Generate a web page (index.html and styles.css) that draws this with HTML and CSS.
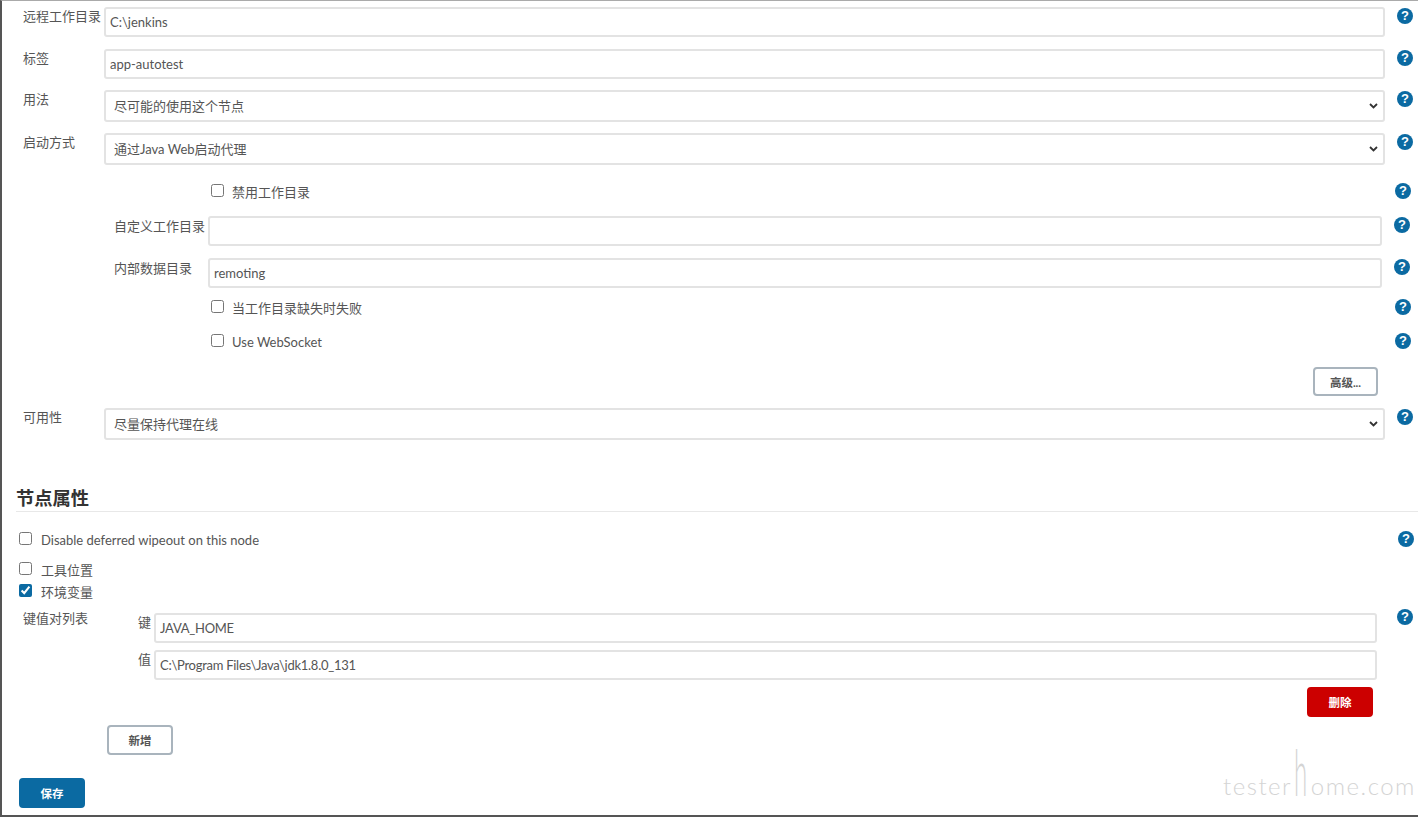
FILE: index.html
```html
<!DOCTYPE html>
<html lang="zh">
<head>
<meta charset="utf-8">
<title>节点配置</title>
<link rel="stylesheet" href="styles.css">
</head>
<body>
<form class="page">
  <div class="row first">
    <label class="label">远程工作目录</label>
    <input class="control wide" value="C:\jenkins">
    <span class="help">?</span>
  </div>
  <div class="row gap-12">
    <label class="label">标签</label>
    <input class="control wide" value="app-autotest">
    <span class="help">?</span>
  </div>
  <div class="row gap-11">
    <label class="label">用法</label>
    <select class="control picker wide"><option>尽可能的使用这个节点</option></select>
    <span class="help">?</span>
  </div>
  <div class="row gap-11">
    <label class="label">启动方式</label>
    <select class="control picker wide"><option>通过Java Web启动代理</option></select>
    <span class="help">?</span>
  </div>

  <div class="check-row nested gap-17">
    <input type="checkbox" class="check"><span class="check-text">禁用工作目录</span>
    <span class="help end">?</span>
  </div>
  <div class="sub gap-14">
    <label class="sub-label">自定义工作目录</label>
    <input class="control sub-field" value="">
    <span class="help">?</span>
  </div>
  <div class="sub gap-12">
    <label class="sub-label">内部数据目录</label>
    <input class="control sub-field" value="remoting">
    <span class="help">?</span>
  </div>
  <div class="check-row nested gap-10">
    <input type="checkbox" class="check"><span class="check-text">当工作目录缺失时失败</span>
    <span class="help end">?</span>
  </div>
  <div class="check-row nested gap-14">
    <input type="checkbox" class="check"><span class="check-text">Use WebSocket</span>
    <span class="help end">?</span>
  </div>
  <div class="advanced gap-15">
    <button type="button" class="btn advanced-btn">高级...</button>
  </div>
  <div class="row gap-12">
    <label class="label">可用性</label>
    <select class="control picker wide"><option>尽量保持代理在线</option></select>
    <span class="help">?</span>
  </div>

  <h2 class="section-title">节点属性</h2>

  <div class="check-row outer gap-18">
    <input type="checkbox" class="check"><span class="check-text">Disable deferred wipeout on this node</span>
    <span class="help end">?</span>
  </div>
  <div class="check-row outer gap-10">
    <input type="checkbox" class="check"><span class="check-text">工具位置</span>
  </div>
  <div class="check-row outer gap-2">
    <input type="checkbox" class="check" checked><span class="check-text">环境变量</span>
  </div>

  <div class="row gap-11">
    <label class="label pair-title">键值对列表</label>
    <label class="pair-label">键</label>
    <input class="control pair-field" value="JAVA_HOME">
    <span class="help pair-help">?</span>
  </div>
  <div class="row gap-7">
    <span class="label"></span>
    <label class="pair-label">值</label>
    <input class="control pair-field" value="C:\Program Files\Java\jdk1.8.0_131">
  </div>
  <div class="delete-row gap-7">
    <button type="button" class="btn danger">删除</button>
  </div>
  <div class="add-row gap-8">
    <button type="button" class="btn">新增</button>
  </div>
  <div class="save-row gap-23">
    <button type="button" class="btn primary">保存</button>
  </div>
</form>
<div class="watermark">tester<span class="tall-h">h</span>ome.com</div>
</body>
</html>
```

FILE: styles.css
```css
* {
  box-sizing: border-box;
}

html,
body {
  margin: 0;
  height: 817px;
  overflow: hidden;
}

body {
  position: relative;
  background: #fff;
  border-left: 2px solid #555;
  border-top: 1px solid #aaa;
  border-bottom: 2px solid #555;
  font-family: "Lato", "Noto Sans CJK SC", sans-serif;
  font-size: 13px;
  line-height: 20px;
  color: #555;
}

.page {
  display: flex;
  flex-direction: column;
}

.first { margin-top: 6px; }
.gap-2 { margin-top: 2px; }
.gap-7 { margin-top: 7px; }
.gap-8 { margin-top: 8px; }
.gap-10 { margin-top: 10px; }
.gap-11 { margin-top: 11px; }
.gap-12 { margin-top: 12px; }
.gap-14 { margin-top: 14px; }
.gap-15 { margin-top: 15px; }
.gap-17 { margin-top: 17px; }
.gap-18 { margin-top: 18px; }
.gap-23 { margin-top: 23px; }

.row {
  display: flex;
  align-items: flex-start;
  padding-left: 21px;
}

.label {
  flex: 0 0 81px;
  margin-top: -1px;
  white-space: nowrap;
}

.control {
  display: block;
  height: 30px;
  padding: 0 4px;
  border: 2px solid #e3e3e3;
  border-radius: 3px;
  background: #fff;
  font: inherit;
  color: #555;
  outline: none;
}

.wide {
  flex: 0 0 1281px;
}

.picker {
  height: 32px;
  padding: 0 24px 0 8px;
  appearance: none;
  -webkit-appearance: none;
  background-image: url("data:image/svg+xml,%3Csvg xmlns='http://www.w3.org/2000/svg' width='9' height='6' viewBox='0 0 9 6'%3E%3Cpath d='M1 1l3.5 3.5L8 1' fill='none' stroke='%23333' stroke-width='1.8'/%3E%3C/svg%3E");
  background-repeat: no-repeat;
  background-position: right 5px center;
}

.help {
  flex: 0 0 16px;
  width: 16px;
  height: 16px;
  margin-top: 1px;
  margin-left: 12px;
  border-radius: 50%;
  background: #0b6aa2;
  color: #fff;
  font-family: "Liberation Sans", sans-serif;
  font-size: 13px;
  font-weight: 700;
  line-height: 16px;
  text-align: center;
}

.help.end {
  margin-left: auto;
}

.check-row {
  display: flex;
  align-items: flex-start;
  height: 20px;
}

.check {
  flex: 0 0 13px;
  width: 13px;
  height: 13px;
  margin: 2px 0 0;
  accent-color: #0b6aa2;
}

.check-text {
  white-space: nowrap;
}

.nested {
  padding-left: 209px;
  padding-right: 7px;
}

.nested .check-text {
  margin-left: 8px;
}

.outer {
  padding-left: 17px;
  padding-right: 4px;
}

.outer .check-text {
  margin-left: 9px;
}

.sub {
  display: flex;
  align-items: flex-start;
  padding-left: 112px;
}

.sub-label {
  flex: 0 0 94px;
  white-space: nowrap;
}

.sub-field {
  flex: 0 0 1174px;
}

.advanced {
  display: flex;
  justify-content: flex-end;
  padding-right: 40px;
}

.btn {
  width: 66px;
  height: 30px;
  padding: 2px 0 0;
  border: 2px solid #a9b4bd;
  border-radius: 4px;
  background: #fff;
  font: inherit;
  font-size: 11.5px;
  font-weight: 700;
  color: #555;
}

.advanced-btn {
  width: 65px;
  height: 29px;
}

.section-title {
  margin: 47px 0 0 14px;
  height: 25px;
  border-bottom: 1px solid #e8e8e8;
  font-size: 18.3px;
  font-weight: 700;
  line-height: 22px;
  color: #333;
}

.pair-title {
  margin-top: -5px;
}

.pair-label {
  flex: 0 0 50px;
  margin-top: -1px;
  padding-right: 3px;
  text-align: right;
}

.pair-field {
  flex: 0 0 1223px;
  letter-spacing: -0.27px;
}

.pair-help {
  margin-top: -4px;
  margin-left: 20px;
}

.delete-row {
  display: flex;
  justify-content: flex-end;
  padding-right: 45px;
}

.danger {
  border-color: #cc0000;
  background: #cc0000;
  color: #fff;
}

.add-row {
  padding-left: 105px;
}

.save-row {
  padding-left: 17px;
}

.primary {
  border-color: #0b6aa2;
  background: #0b6aa2;
  color: #fff;
}

.watermark {
  position: absolute;
  left: 1221px;
  top: 770px;
  font-family: "Lato", sans-serif;
  font-size: 24px;
  font-weight: 300;
  line-height: 30px;
  letter-spacing: 1.5px;
  white-space: nowrap;
  color: #d4d4d4;
}

.tall-h {
  display: inline-block;
  margin: 0 2px;
  transform: scaleY(2.7);
  transform-origin: 50% 78%;
}
```
